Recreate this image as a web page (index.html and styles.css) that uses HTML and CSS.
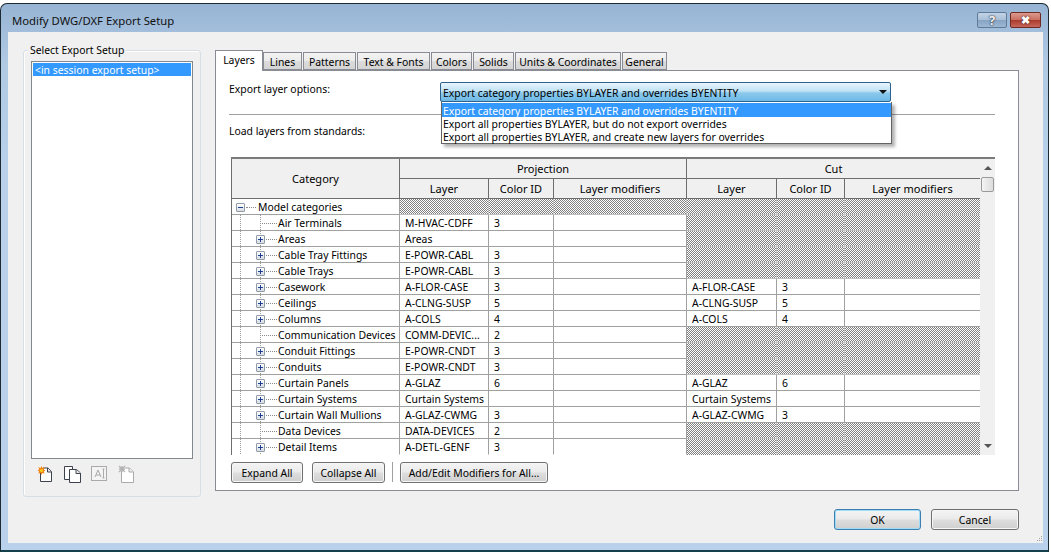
FILE: index.html
```html
<!DOCTYPE html>
<html lang="en">
<head>
<meta charset="utf-8">
<title>Modify DWG/DXF Export Setup</title>
<link rel="stylesheet" href="styles.css">
</head>
<body>
<div class="window">
  <div class="titlebar">
    <span class="title">Modify DWG/DXF Export Setup</span>
    <span class="capbtn help">?</span>
    <span class="capbtn close">&#10006;</span>
  </div>
  <div class="client">
    <div class="main">
      <div class="group">
        <span class="legend">Select Export Setup</span>
        <div class="list"><div class="list-sel">&lt;in session export setup&gt;</div></div>
        <div class="icons">
          <svg width="18" height="18" viewBox="0 0 18 18"><path d="M4.5 6V16.5H15.5V6.5L12 3H7" fill="#fff" stroke="#3c424c"/><path d="M11.5 3V7H15.5" fill="#e8e8e8" stroke="#3c424c"/><path d="M5.5 1L6.4 3 8.6 2.2 7.8 4.4 9.5 5.5 7.8 6.5 8.6 8.6 6.4 7.9 5.5 10 4.6 7.9 2.4 8.6 3.2 6.5 1.5 5.5 3.2 4.4 2.4 2.2 4.6 3Z" fill="#f08010"/><circle cx="5.5" cy="5.5" r="1.6" fill="#f8d020"/></svg>
          <svg width="18" height="18" viewBox="0 0 18 18"><path d="M7 14.5H1.5V1.5H9.5V4" fill="#fff" stroke="#3c424c"/><path d="M6.5 4.5V17.5H17.5V8L13.5 4.5Z" fill="#fff" stroke="#3c424c"/><path d="M13 4.5V8.5H17.5" fill="#e8e8e8" stroke="#3c424c"/></svg>
          <svg width="18" height="18" viewBox="0 0 18 18"><rect x="1.5" y="1.5" width="15" height="14" fill="#f4f4f4" stroke="#aaa"/><path d="M5 12L8 5 11 12M6 10H10M13.5 4V13M12.5 4H14.5M12.5 13H14.5" fill="none" stroke="#aaa"/></svg>
          <svg width="18" height="18" viewBox="0 0 18 18"><path d="M4.5 6V17.5H16.5V7L12.5 3H8" fill="#fff" stroke="#aaa"/><path d="M12 3V7H16.5" fill="#eee" stroke="#aaa"/><path d="M2 1L8 7M8 1L2 7M5 1V7M2 4H8" stroke="#b5b5b5" stroke-width="1.4"/></svg>
        </div>
      </div>
      <div class="tabs-col">
        <div class="tabs">
          <span class="tab active t-layers">Layers</span>
          <span class="tab t-lines">Lines</span>
          <span class="tab t-patterns">Patterns</span>
          <span class="tab t-text">Text &amp; Fonts</span>
          <span class="tab t-colors">Colors</span>
          <span class="tab t-solids">Solids</span>
          <span class="tab t-units">Units &amp; Coordinates</span>
          <span class="tab t-general">General</span>
        </div>
        <div class="panel">
          <div class="opt-row">
            <span class="opt-label">Export layer options:</span>
            <div class="combo">
              <span>Export category properties BYLAYER and overrides BYENTITY</span>
              <span class="combo-arrow"></span>
              <div class="dropdown">
                <div class="opt sel">Export category properties BYLAYER and overrides BYENTITY</div>
                <div class="opt">Export all properties BYLAYER, but do not export overrides</div>
                <div class="opt">Export all properties BYLAYER, and create new layers for overrides</div>
              </div>
            </div>
          </div>
          <div class="divider"></div>
          <div class="load-row">Load layers from standards:</div>
          <div class="table-wrap">
            <table class="grid">
              <colgroup>
                <col class="c-cat"><col class="c-layer"><col class="c-color"><col class="c-mod"><col class="c-layer2"><col class="c-color2"><col class="c-mod2">
              </colgroup>
              <thead>
                <tr><th rowspan="2">Category</th><th colspan="3">Projection</th><th colspan="3" class="last">Cut</th></tr>
                <tr><th>Layer</th><th>Color ID</th><th>Layer modifiers</th><th>Layer</th><th>Color ID</th><th class="last">Layer modifiers</th></tr>
              </thead>
              <tbody>
                <tr><td class="root"><div class="node"><span class="exp minus"></span><span class="dash short"></span><span>Model categories</span></div></td><td class="h"></td><td class="h"></td><td class="h"></td><td class="h"></td><td class="h"></td><td class="h"></td></tr>
                <tr><td class="tree"><div class="node leaf"><span class="dash long"></span><span>Air Terminals</span></div></td><td>M-HVAC-CDFF</td><td>3</td><td></td><td class="h"></td><td class="h"></td><td class="h"></td></tr>
                <tr><td class="tree"><div class="node"><span class="exp"></span><span class="dash"></span><span>Areas</span></div></td><td>Areas</td><td></td><td></td><td class="h"></td><td class="h"></td><td class="h"></td></tr>
                <tr><td class="tree"><div class="node"><span class="exp"></span><span class="dash"></span><span>Cable Tray Fittings</span></div></td><td>E-POWR-CABL</td><td>3</td><td></td><td class="h"></td><td class="h"></td><td class="h"></td></tr>
                <tr><td class="tree"><div class="node"><span class="exp"></span><span class="dash"></span><span>Cable Trays</span></div></td><td>E-POWR-CABL</td><td>3</td><td></td><td class="h"></td><td class="h"></td><td class="h"></td></tr>
                <tr><td class="tree"><div class="node"><span class="exp"></span><span class="dash"></span><span>Casework</span></div></td><td>A-FLOR-CASE</td><td>3</td><td></td><td>A-FLOR-CASE</td><td>3</td><td></td></tr>
                <tr><td class="tree"><div class="node"><span class="exp"></span><span class="dash"></span><span>Ceilings</span></div></td><td>A-CLNG-SUSP</td><td>5</td><td></td><td>A-CLNG-SUSP</td><td>5</td><td></td></tr>
                <tr><td class="tree"><div class="node"><span class="exp"></span><span class="dash"></span><span>Columns</span></div></td><td>A-COLS</td><td>4</td><td></td><td>A-COLS</td><td>4</td><td></td></tr>
                <tr><td class="tree"><div class="node leaf"><span class="dash long"></span><span>Communication Devices</span></div></td><td>COMM-DEVIC...</td><td>2</td><td></td><td class="h"></td><td class="h"></td><td class="h"></td></tr>
                <tr><td class="tree"><div class="node"><span class="exp"></span><span class="dash"></span><span>Conduit Fittings</span></div></td><td>E-POWR-CNDT</td><td>3</td><td></td><td class="h"></td><td class="h"></td><td class="h"></td></tr>
                <tr><td class="tree"><div class="node"><span class="exp"></span><span class="dash"></span><span>Conduits</span></div></td><td>E-POWR-CNDT</td><td>3</td><td></td><td class="h"></td><td class="h"></td><td class="h"></td></tr>
                <tr><td class="tree"><div class="node"><span class="exp"></span><span class="dash"></span><span>Curtain Panels</span></div></td><td>A-GLAZ</td><td>6</td><td></td><td>A-GLAZ</td><td>6</td><td></td></tr>
                <tr><td class="tree"><div class="node"><span class="exp"></span><span class="dash"></span><span>Curtain Systems</span></div></td><td>Curtain Systems</td><td></td><td></td><td>Curtain Systems</td><td></td><td></td></tr>
                <tr><td class="tree"><div class="node"><span class="exp"></span><span class="dash"></span><span>Curtain Wall Mullions</span></div></td><td>A-GLAZ-CWMG</td><td>3</td><td></td><td>A-GLAZ-CWMG</td><td>3</td><td></td></tr>
                <tr><td class="tree"><div class="node leaf"><span class="dash long"></span><span>Data Devices</span></div></td><td>DATA-DEVICES</td><td>2</td><td></td><td class="h"></td><td class="h"></td><td class="h"></td></tr>
                <tr><td class="tree"><div class="node"><span class="exp"></span><span class="dash"></span><span>Detail Items</span></div></td><td>A-DETL-GENF</td><td>3</td><td></td><td class="h"></td><td class="h"></td><td class="h"></td></tr>
              </tbody>
            </table>
            <div class="scroll">
              <div class="sb-btn"><span class="tri-up"></span></div>
              <div class="sb-thumb"></div>
              <div class="sb-track"></div>
              <div class="sb-btn"><span class="tri-down"></span></div>
            </div>
          </div>
          <div class="bar">
            <button class="btn b-expand">Expand All</button>
            <button class="btn b-collapse">Collapse All</button>
            <span class="bar-sep"></span>
            <button class="btn b-add">Add/Edit Modifiers for All...</button>
          </div>
        </div>
      </div>
    </div>
    <div class="footer">
      <button class="btn b-ok">OK</button>
      <button class="btn b-cancel">Cancel</button>
      <svg class="grip" width="8" height="8" viewBox="0 0 8 8"><path d="M6 1h1v1H6zM4 3h1v1H4zM6 3h1v1H6zM2 5h1v1H2zM4 5h1v1H4zM6 5h1v1H6z" fill="#a0a0a0"/></svg>
    </div>
  </div>
</div>
</body>
</html>
```
FILE: styles.css
```css
* { box-sizing: border-box; }
html, body { margin: 0; height: 100%; overflow: hidden; }
body {
  background: #fff;
  font-family: "Noto Sans", "Liberation Sans", sans-serif;
  font-size: 10.4px;
  line-height: 15px;
  color: #000;
  padding-top: 3px;
}
.window {
  width: 1049px;
  height: 549px;
  border: 1px solid #1c2a33;
  border-bottom: 2px solid #14404c;
  border-radius: 7px 7px 0 0;
  background: linear-gradient(#97b4d4 0, #b0cae4 60px, #b9d1ea 160px, #b9d1ea 100%);
  padding: 0 5px 7px 7px;
  display: flex;
  flex-direction: column;
}
.titlebar {
  height: 28px;
  flex: none;
  display: flex;
  align-items: flex-start;
  margin-right: 2px;
  padding-left: 4px;
  padding-top: 8px;
  gap: 3px;
}
.title { flex: 1; font-size: 11.3px; line-height: 18px; color: #111; }
.capbtn {
  width: 30px;
  height: 16px;
  border: 1px solid #5f7a97;
  border-radius: 2px;
  text-align: center;
  color: #fff;
  font-weight: bold;
  font-size: 13px;
  line-height: 14px;
}
.help {
  background: linear-gradient(#c3d3e5 0, #a9c0d9 50%, #86a3c3 51%, #9cb8d4 100%);
  text-shadow: 0 0 1px #223, 0 0 2px #223;
  color: #f4f4f4;
}
.close {
  width: 31px;
  border-color: #6f2a24;
  background: linear-gradient(#dd9a8e 0, #c96e60 50%, #a93a2c 51%, #c7665a 100%);
  text-shadow: 0 0 2px #311;
  font-size: 11px;
}
.client {
  flex: 1;
  background: #f0f0f0;
  display: flex;
  flex-direction: column;
  position: relative;
}
.main { display: flex; padding: 18px 0 0 15px; gap: 14px; }
.group {
  width: 178px;
  height: 447px;
  border: 1px solid #d5dfe5;
  border-radius: 3px;
  padding: 10px 7px 0;
  position: relative;
  box-shadow: inset 1px 1px 0 #fff;
}
.legend {
  position: absolute;
  left: 4px;
  top: -8px;
  padding: 0 2px;
  background: #f0f0f0;
}
.list {
  width: 162px;
  height: 398px;
  background: #fff;
  border: 1px solid #828790;
  padding: 1px;
}
.list-sel {
  height: 13px;
  background: #3399ff;
  color: #fff;
  line-height: 15px;
  padding-left: 2px;
}
.icons { display: flex; gap: 9px; padding: 6px 0 0 5px; }
.tabs-col { width: 804px; display: flex; flex-direction: column; }
.tabs { display: flex; align-items: flex-end; gap: 1px; height: 20px; position: relative; z-index: 1; }
.tab {
  height: 18px;
  border: 1px solid #898c95;
  background: linear-gradient(#f3f3f3, #ebebeb 50%, #dcdcdc 51%, #d4d4d4);
  text-align: center;
  line-height: 18px;
  white-space: nowrap;
  overflow: hidden;
}
.tab.active {
  height: 21px;
  margin-bottom: -1px;
  background: #fff;
  border-bottom: 0;
  line-height: 19px;
}
.t-layers { width: 48px; margin-right: -1px; }
.t-lines { width: 39px; }
.t-patterns { width: 53px; }
.t-text { width: 73px; }
.t-colors { width: 41px; }
.t-solids { width: 41px; }
.t-units { width: 106px; }
.t-general { width: 45px; }
.panel {
  height: 421px;
  background: #fff;
  border: 1px solid #898c95;
  padding: 11px 0 0 13px;
}
.opt-row { display: flex; height: 20px; }
.opt-label { width: 211px; line-height: 14px; }
.combo {
  width: 451px;
  height: 20px;
  border: 1px solid #2c628b;
  border-radius: 2px;
  background: linear-gradient(#e9f5fc 0, #bfe2f5 45%, #8cc9ec 55%, #6db9e6 100%);
  padding-left: 2px;
  line-height: 20px;
  display: flex;
  justify-content: space-between;
  position: relative;
}
.combo-arrow {
  width: 0;
  height: 0;
  border: 4px solid transparent;
  border-top: 4px solid #111;
  border-bottom: 0;
  margin: 7px 3px 0 0;
}
.dropdown {
  position: absolute;
  left: 0;
  top: 19px;
  width: 451px;
  padding-top: 1px;
  background: #fff;
  border: 1px solid #646464;
  border-top: 0;
  box-shadow: 3px 3px 3px rgba(0, 0, 0, .3);
  z-index: 2;
}
.opt { height: 13px; line-height: 15px; padding-left: 1px; white-space: nowrap; }
.opt.sel { height: 14px; line-height: 17px; background: #3399ff; color: #fff; }
.divider { width: 766px; height: 1px; background: #a0a0a0; margin-top: 12px; }
.load-row { margin-top: 8px; height: 16px; line-height: 16px; }
.table-wrap {
  display: flex;
  width: 764px;
  height: 298px;
  margin: 18px 0 0 2px;
  border-top: 2px solid #7b7b7b;
}
.grid {
  width: 749px;
  height: 296px;
  table-layout: fixed;
  border-collapse: separate;
  border-spacing: 0;
  border-left: 1px solid #6d6d6d;
  flex: none;
}
.c-cat { width: 168px; }
.c-layer { width: 89px; }
.c-color { width: 65px; }
.c-mod { width: 133px; }
.c-layer2 { width: 90px; }
.c-color2 { width: 68px; }
.c-mod2 { width: 135px; }
th {
  font-weight: normal;
  background: #f0f0f0;
  height: 20px;
  padding: 0;
  border-right: 1px solid #6d6d6d;
  border-bottom: 1px solid #6d6d6d;
  text-align: center;
  font-size: 11px;
}
th.last { border-right: 0; }
td {
  height: 16px;
  padding: 2px 0 0 5px;
  border-right: 1px solid #a0a0a0;
  border-bottom: 1px solid #a0a0a0;
  white-space: nowrap;
  overflow: hidden;
  line-height: 13px;
}
td:last-child { border-right: 0; }
td.h {
  background: repeating-conic-gradient(#808080 0 25%, #fff 0 50%) 0 0 / 2px 2px;
  border-color: #c0c0c0;
}
tbody tr:last-child td { border-bottom-color: transparent; }
td.root, td.tree { padding: 2px 0 0; }
td.root { padding-left: 4px; }
td.tree {
  background-image:
    linear-gradient(#9a9a9a 50%, transparent 50%),
    linear-gradient(#9a9a9a 50%, transparent 50%);
  background-size: 1px 2px;
  background-position: 8px 0, 28px 0;
  background-repeat: repeat-y;
  padding-left: 24px;
}
.node { display: flex; align-items: center; height: 13px; }
.node.leaf { padding-left: 5px; }
.exp {
  width: 9px;
  height: 9px;
  flex: none;
  border: 1px solid #8f9ca8;
  border-radius: 1px;
  background:
    linear-gradient(#1f3f8f, #1f3f8f) center / 5px 1px no-repeat,
    linear-gradient(#1f3f8f, #1f3f8f) center / 1px 5px no-repeat,
    linear-gradient(#fff, #d8dce2);
}
.exp.minus {
  background:
    linear-gradient(#1f3f8f, #1f3f8f) center / 5px 1px no-repeat,
    linear-gradient(#fff, #d8dce2);
}
.dash {
  width: 11px;
  margin: 0 1px 0 1px;
  flex: none;
  border-top: 1px dotted #8a8a8a;
}
.dash.short { width: 10px; margin-right: 2px; }
.dash.long { width: 15px; margin: 0 1px 0 1px; }
.scroll {
  width: 15px;
  height: 296px;
  background: #f0f0f0;
  display: flex;
  flex-direction: column;
  flex: none;
}
.sb-btn { height: 18px; display: flex; align-items: center; justify-content: center; }
.tri-up, .tri-down {
  width: 0;
  height: 0;
  border-left: 4px solid transparent;
  border-right: 4px solid transparent;
}
.tri-up { border-bottom: 4px solid #555; }
.tri-down { border-top: 4px solid #555; }
.sb-thumb {
  height: 15px;
  margin: 0 1px;
  border: 1px solid #9a9a9a;
  border-radius: 2px;
  background: linear-gradient(90deg, #f4f4f4, #dcdcdc);
}
.sb-track { flex: 1; }
.bar { display: flex; align-items: flex-start; margin: 7px 0 0 2px; }
.btn {
  height: 21px;
  padding: 2px 0 0;
  border: 1px solid #707070;
  border-radius: 3px;
  background: linear-gradient(#f4f4f4 0, #ebebeb 45%, #dddddd 55%, #cfcfcf 100%);
  box-shadow: inset 0 0 0 1px #f6f6f6;
  font: inherit;
  line-height: 15px;
  color: #000;
}
.b-expand { width: 72px; }
.b-collapse { width: 73px; margin-left: 9px; }
.bar-sep { width: 1px; height: 20px; margin: 0 7px; background: #a0a0a0; }
.b-add { width: 148px; }
.footer { display: flex; justify-content: flex-end; gap: 10px; margin-top: 12px; padding-right: 24px; }
.b-ok { width: 87px; border-color: #3c7fb1; box-shadow: inset 0 0 0 1px #9fdcf5; }
.b-cancel { width: 88px; }
.grip { position: absolute; right: 0; bottom: 0; }
```
